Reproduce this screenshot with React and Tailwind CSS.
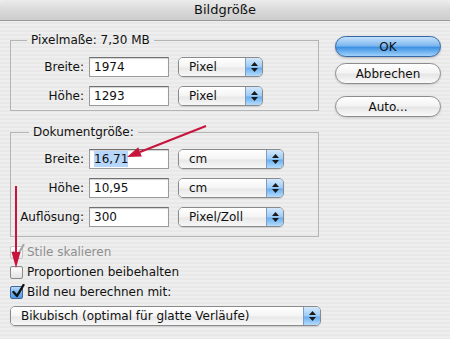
import React from "react";

const Arrows = () => (
  <span className="flex flex-col items-center justify-center gap-[2px]">
    <svg width="7" height="4" viewBox="0 0 7 4">
      <path d="M3.5 0 L7 4 L0 4 Z" fill="#1a1a1a" />
    </svg>
    <svg width="7" height="4" viewBox="0 0 7 4">
      <path d="M0 0 L7 0 L3.5 4 Z" fill="#1a1a1a" />
    </svg>
  </span>
);

const Popup = ({ className, children }) => (
  <div
    className={`flex h-[20px] rounded-[5px] border border-[#8a8a8a] overflow-hidden shadow-[0_1px_1px_rgba(0,0,0,0.12)] ${className}`}
  >
    <div className="flex-1 flex items-center pl-[10px] bg-[linear-gradient(#ffffff,#f4f4f4_50%,#e8e8e8_55%,#f7f7f7)]">
      {children}
    </div>
    <div className="w-[17px] flex items-center justify-center border-l border-[#7d9ec4] bg-[linear-gradient(#d3e8fc,#9ccbf5_50%,#6aaef0_55%,#b4dcfc)]">
      <Arrows />
    </div>
  </div>
);

const Input = ({ children }) => (
  <div className="w-[80px] h-[20px] flex items-center pl-[4px] bg-white border border-[#9b9b9b] border-t-[#6f6f6f] shadow-[inset_0_1px_1px_rgba(0,0,0,0.18)]">
    {children}
  </div>
);

const Row = ({ label, children }) => (
  <div className="flex items-center h-[20px]">
    <span className="w-[78px] pr-[5px] text-right">{label}</span>
    {children}
  </div>
);

const Button = ({ primary, children }) => (
  <div
    className={
      primary
        ? "h-[21px] w-[106px] rounded-full border border-[#3466a3] flex items-center justify-center bg-[linear-gradient(#c6e1fb,#7fb9f0_45%,#3f92e3_55%,#9fd2fb)] shadow-[0_1px_2px_rgba(0,0,0,0.25)]"
        : "h-[21px] w-[106px] rounded-full border border-[#8c8c8c] flex items-center justify-center bg-[linear-gradient(#ffffff,#f4f4f4_45%,#e6e6e6_55%,#fafafa)] shadow-[0_1px_2px_rgba(0,0,0,0.15)]"
    }
  >
    {children}
  </div>
);

const Check = ({ state }) => {
  if (state === "on") {
    return (
      <span className="relative w-[13px] h-[13px] rounded-[2px] border border-[#41679b] bg-[linear-gradient(#b9dbfb,#6fb0ee_55%,#4e9be6)]">
        <svg className="absolute left-[1px] top-[-3px]" width="13" height="14" viewBox="0 0 13 14">
          <path d="M1.5 8 L5 12 L11.5 1" stroke="#111" strokeWidth="2.4" fill="none" strokeLinecap="round" strokeLinejoin="round" />
        </svg>
      </span>
    );
  }
  if (state === "disabled") {
    return (
      <span className="relative w-[13px] h-[13px] rounded-[2px] border border-[#c4c4c4] bg-[linear-gradient(#ffffff,#ececec)]">
        <svg className="absolute left-[1px] top-[-3px]" width="13" height="14" viewBox="0 0 13 14">
          <path d="M1.5 8 L5 12 L11.5 1" stroke="#a8a8a8" strokeWidth="2.2" fill="none" strokeLinecap="round" strokeLinejoin="round" />
        </svg>
      </span>
    );
  }
  return (
    <span className="w-[13px] h-[13px] rounded-[2px] border border-[#8a8a8a] bg-[linear-gradient(#ffffff,#f0f0f0_50%,#e2e2e2)] shadow-[inset_0_1px_1px_rgba(0,0,0,0.08)]" />
  );
};

export default function App() {
  return (
    <div className="relative w-[450px] h-[339px] overflow-hidden text-[12px] leading-[16px] text-[#111] font-['DejaVu_Sans',Verdana,sans-serif] bg-[repeating-linear-gradient(to_bottom,#eeeeee_0px,#eeeeee_2px,#e8e8e8_2px,#e8e8e8_4px)]">
      <div className="h-[21px] flex items-center justify-center text-[13px] border-b border-[#9a9a9a] bg-[linear-gradient(#ececec,#d9d9d9_50%,#cdcdcd)] rounded-t-[5px]">
        Bildgröße
      </div>

      <div className="flex pl-[10px]">
        <div className="w-[311px] mt-[11px]">
          <fieldset className="w-[309px] border border-[#b4b4b4] pt-[9px] pb-[4px] flex flex-col gap-[9px]">
            <legend className="ml-[16px] px-[4px] h-[16px]">Pixelmaße: 7,30 MB</legend>
            <Row label="Breite:">
              <Input>1974</Input>
              <Popup className="ml-[9px] w-[85px]">Pixel</Popup>
            </Row>
            <Row label="Höhe:">
              <Input>1293</Input>
              <Popup className="ml-[9px] w-[85px]">Pixel</Popup>
            </Row>
          </fieldset>

          <fieldset className="mt-[13px] w-[309px] border border-[#b4b4b4] pt-[9px] pb-[9px] flex flex-col gap-[9px]">
            <legend className="ml-[18px] px-[4px] h-[16px]">Dokumentgröße:</legend>
            <Row label="Breite:">
              <Input>
                <span className="bg-[#b7d6fb]">16,71</span>
              </Input>
              <Popup className="ml-[9px] w-[106px]">cm</Popup>
            </Row>
            <Row label="Höhe:">
              <Input>10,95</Input>
              <Popup className="ml-[9px] w-[106px]">cm</Popup>
            </Row>
            <Row label="Auflösung:">
              <Input>300</Input>
              <Popup className="ml-[9px] w-[106px]">Pixel/Zoll</Popup>
            </Row>
          </fieldset>

          <div className="mt-[5px] flex flex-col">
            <label className="h-[20px] flex items-center gap-[4px] text-[#8f8f8f]">
              <Check state="disabled" />
              Stile skalieren
            </label>
            <label className="h-[20px] flex items-center gap-[4px]">
              <Check state="off" />
              Proportionen beibehalten
            </label>
            <label className="h-[20px] flex items-center gap-[4px]">
              <Check state="on" />
              Bild neu berechnen mit:
            </label>
          </div>

          <Popup className="mt-[4px] w-[311px]">Bikubisch (optimal für glatte Verläufe)</Popup>
        </div>

        <div className="ml-[14px] mt-[15px] flex flex-col">
          <Button primary>OK</Button>
          <div className="mt-[6px]">
            <Button>Abbrechen</Button>
          </div>
          <div className="mt-[12px]">
            <Button>Auto...</Button>
          </div>
        </div>
      </div>

      <svg className="absolute inset-0 pointer-events-none" width="450" height="339" viewBox="0 0 450 339">
        <line x1="206" y1="126" x2="140" y2="152" stroke="#c8143c" strokeWidth="2" />
        <polygon points="127,157 141.8,156.5 138.2,147.2" fill="#c8143c" />
        <line x1="16" y1="186" x2="16" y2="254" stroke="#c8143c" strokeWidth="2" />
        <polygon points="16,268 11.5,252 20.5,252" fill="#c8143c" />
      </svg>
    </div>
  );
}
